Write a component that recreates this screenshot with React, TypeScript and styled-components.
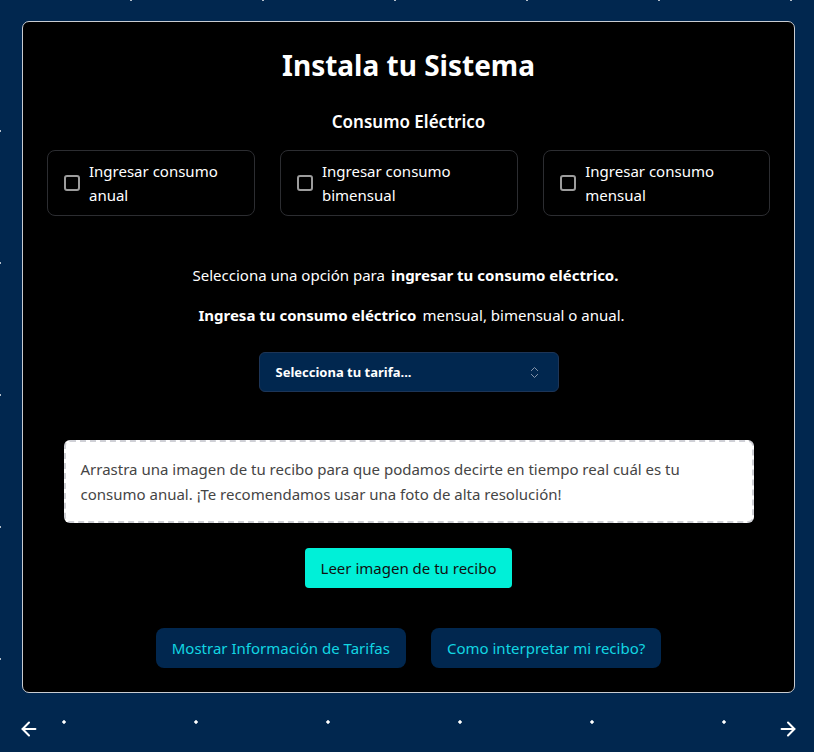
import React from 'react';
import styled, { createGlobalStyle } from 'styled-components';
import { ArrowLeft, ArrowRight, ChevronsUpDown } from 'lucide-react';

const NAVY = '#01274f';
const TEAL = '#00f0d8';

const GlobalStyle = createGlobalStyle`
  html, body {
    margin: 0;
    min-height: 100%;
  }
  body {
    min-height: 752px;
    font-family: "Noto Sans", "Open Sans", sans-serif;
    background-color: ${NAVY};
    background-image:
      radial-gradient(circle, #ffffff 1.4px, transparent 2px),
      radial-gradient(circle, #ffffff 1.4px, transparent 2px);
    background-size: 132px 132px, 132px 132px;
    background-position: -2px -4px, -67px -67px;
  }
`;

const Stage = styled.div`
  padding: 21px 19px 0 22px;
`;

const Card = styled.section`
  background: #000;
  border: 1px solid #c9ccd1;
  border-radius: 7px;
  padding: 22px 24px 24px 24px;
  display: flex;
  flex-direction: column;
  align-items: center;
  color: #fff;
`;

const Title = styled.h1`
  margin: 0;
  font-size: 28px;
  line-height: 42px;
  font-weight: 700;
`;

const Subtitle = styled.h2`
  margin: 24px 0 0;
  font-size: 17px;
  line-height: 24px;
  font-weight: 600;
`;

const OptionRow = styled.div`
  margin-top: 16px;
  align-self: stretch;
  display: flex;
  gap: 25px;
`;

const Option = styled.label`
  display: flex;
  align-items: center;
  gap: 9px;
  padding: 8px 16px;
  border: 1px solid #2c2d31;
  border-radius: 8px;
  font-size: 15px;
  line-height: 24px;
  cursor: pointer;
`;

const Check = styled.input.attrs({ type: 'checkbox' })`
  appearance: none;
  flex: 0 0 auto;
  width: 16px;
  height: 16px;
  margin: 0;
  border: 2px solid #9c9c9c;
  border-radius: 3px;
  background: transparent;
`;

const Text = styled.p<{ $top: number }>`
  margin: ${(p) => p.$top}px 0 0;
  font-size: 15px;
  line-height: 24px;
  text-align: center;

  strong {
    font-weight: 700;
    margin: 0 6px;
  }
`;

const Select = styled.button`
  margin-top: 25px;
  width: 300px;
  height: 40px;
  display: flex;
  align-items: center;
  justify-content: space-between;
  padding: 0 16px;
  background: ${NAVY};
  border: 1px solid #1d3557;
  border-radius: 6px;
  color: #fff;
  font-family: inherit;
  font-size: 13px;
  font-weight: 700;
  cursor: pointer;
`;

const DropZone = styled.div`
  margin-top: 48px;
  width: 690px;
  box-sizing: border-box;
  padding: 15px 17px 14px 15px;
  background: #fff;
  border: 2px dashed #cfd0d6;
  border-radius: 6px;
  color: #454545;
  font-size: 15px;
  line-height: 25px;
`;

const ReadButton = styled.button`
  margin-top: 25px;
  height: 40px;
  padding: 0 16px;
  background: ${TEAL};
  border: none;
  border-radius: 4px;
  color: #111;
  font-family: inherit;
  font-size: 15px;
  cursor: pointer;
`;

const LinkRow = styled.div`
  margin-top: 40px;
  display: flex;
  gap: 25px;
`;

const LinkButton = styled.button`
  height: 40px;
  padding: 0 16px;
  background: ${NAVY};
  border: none;
  border-radius: 8px;
  color: #12d6e2;
  font-family: inherit;
  font-size: 15px;
  cursor: pointer;
`;

const Controls = styled.div`
  display: flex;
  justify-content: space-between;
  align-items: center;
  padding: 25px 15px 0 18px;
  color: #fff;
`;

const options = [
  'Ingresar consumo anual',
  'Ingresar consumo bimensual',
  'Ingresar consumo mensual',
];

export default function App() {
  return (
    <>
      <GlobalStyle />
      <Stage>
        <Card>
          <Title>Instala tu Sistema</Title>
          <Subtitle>Consumo Eléctrico</Subtitle>

          <OptionRow>
            {options.map((label) => (
              <Option key={label}>
                <Check />
                <span>{label}</span>
              </Option>
            ))}
          </OptionRow>

          <Text $top={47}>
            Selecciona una opción para<strong>ingresar tu consumo eléctrico.</strong>
          </Text>
          <Text $top={16}>
            <strong>Ingresa tu consumo eléctrico</strong>mensual, bimensual o anual.
          </Text>

          <Select>
            <span>Selecciona tu tarifa...</span>
            <ChevronsUpDown size={15} color="#8796ab" strokeWidth={1.6} />
          </Select>

          <DropZone>
            Arrastra una imagen de tu recibo para que podamos decirte en tiempo real cuál es tu
            consumo anual. ¡Te recomendamos usar una foto de alta resolución!
          </DropZone>

          <ReadButton>Leer imagen de tu recibo</ReadButton>

          <LinkRow>
            <LinkButton>Mostrar Información de Tarifas</LinkButton>
            <LinkButton>Como interpretar mi recibo?</LinkButton>
          </LinkRow>
        </Card>
      </Stage>
      <Controls>
        <ArrowLeft size={22} strokeWidth={2.2} />
        <ArrowRight size={22} strokeWidth={2.2} />
      </Controls>
    </>
  );
}
